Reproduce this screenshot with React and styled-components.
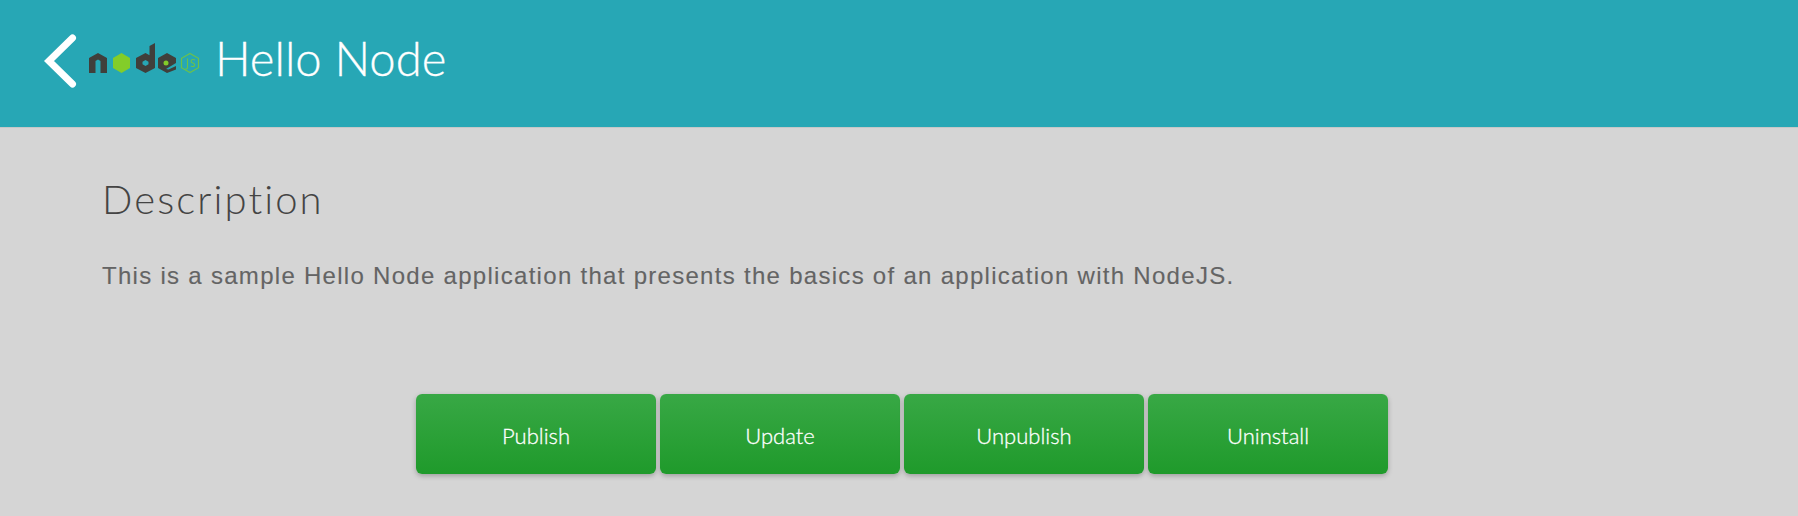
import React from 'react'
import styled, { createGlobalStyle } from 'styled-components'

const GlobalStyle = createGlobalStyle`
  html, body {
    margin: 0;
    height: 100%;
    background: #d5d5d5;
  }
`

const NodeLogo = () => (
  <LogoSvg viewBox="0 0 112 32" width="112" height="32">
    {/* n */}
    <path d="M0 30V15l9-5 9 5v15h-6.500V18l-2.500-1.400L6.500 18v12z" fill="#403f3b" />
    {/* o */}
    <path d="M32.500 10l8.500 5v10l-8.500 5-8.500-5V15z" fill="#83cd29" />
    {/* d */}
    <path d="M60.500 3l5.500-3v25l-9.500 5-9.500-5V15l9.500-5 4 2.200zM56.500 17l-3 1.700v2.600l3 1.700 3-1.700v-2.600z" fill="#403f3b" fillRule="evenodd" />
    {/* e */}
    <path d="M69 15l9-5 9 5v5l-10 6 2.500 .5 7.500-3.500v3.500L78 30l-9-5z" fill="#403f3b" />
    <circle cx="77" cy="20" r="2.500" fill="#83cd29" />
    {/* js badge */}
    <path d="M101 10.500l8.500 4.800v9.400L101 29.500l-8.500-4.800v-9.400z" fill="none" stroke="#6cc24a" strokeWidth="1.200" />
    <path d="M98.500 15.500v9q0 1.800-2 1.200M106 17q-3.200-1.300-3.800.8t2.200 2.400q2.200 1 .9 2.800-1.100 1-3.600-.1" fill="none" stroke="#6cc24a" strokeWidth="1.100" />
  </LogoSvg>
)

const ACTIONS = ['Publish', 'Update', 'Unpublish', 'Uninstall']

export default function App() {
  return (
    <Page>
      <GlobalStyle />
      <Header>
        <BackLink href="#" aria-label="Back">
          <svg viewBox="0 0 36 56" width="36" height="56">
            <path d="M30.500 5L7 28l23.500 23" fill="none" stroke="#fff" strokeWidth="7" strokeLinecap="round" strokeLinejoin="miter" />
          </svg>
        </BackLink>
        <NodeLogo />
        <Title>Hello Node</Title>
      </Header>
      <Content>
        <Heading>Description</Heading>
        <Text>This is a sample Hello Node application that presents the basics of an application with NodeJS.</Text>
      </Content>
      <Actions>
        {ACTIONS.map(a => (
          <ActionBtn key={a}>{a}</ActionBtn>
        ))}
      </Actions>
    </Page>
  )
}

const Page = styled.div`
  width: 100%;
  height: 516px;
  overflow: hidden;
  background: #d5d5d5;
`

const Header = styled.header`
  display: flex;
  align-items: flex-start;
  height: 128px;
  padding: 33px 0 0 42px;
  box-sizing: border-box;
  background: #27a7b5;
  border-bottom: 1px solid #c4c8c8;
`

const BackLink = styled.a`
  display: block;
  width: 36px;
  height: 56px;
`

const LogoSvg = styled.svg`
  display: block;
  margin: 10px 0 0 11px;
`

const Title = styled.h1`
  margin: -4px 0 0 14px;
  font-family: Lato, sans-serif;
  font-weight: 300;
  font-size: 47.200px;
  line-height: 58px;
  color: #fff;
  -webkit-text-stroke: 0.3px #fff;
`

const Content = styled.section`
  padding: 48px 0 0 102px;
`

const Heading = styled.h2`
  margin: 0;
  font-family: Lato, sans-serif;
  font-weight: 300;
  font-size: 40px;
  line-height: 46px;
  letter-spacing: 2.1px;
  color: #444;
`

const Text = styled.p`
  margin: 40px 0 0;
  font-family: "Liberation Sans", Arial, sans-serif;
  font-size: 24px;
  line-height: 28px;
  letter-spacing: 1.29px;
  color: #646464;
  -webkit-text-stroke: 0.12px #646464;
`

const Actions = styled.div`
  display: flex;
  gap: 4px;
  margin: 104px 0 0 416px;
`

const ActionBtn = styled.button`
  width: 240px;
  height: 80px;
  padding: 2px 0 0;
  border: none;
  border-radius: 6px;
  background: linear-gradient(to bottom, #38a845, #1f9a2b);
  box-shadow: 0 2px 5px rgba(0, 0, 0, 0.25);
  color: #fff;
  font-family: Lato, sans-serif;
  font-size: 22px;
  font-weight: 300;
  -webkit-text-stroke: 0.3px #fff;
`
